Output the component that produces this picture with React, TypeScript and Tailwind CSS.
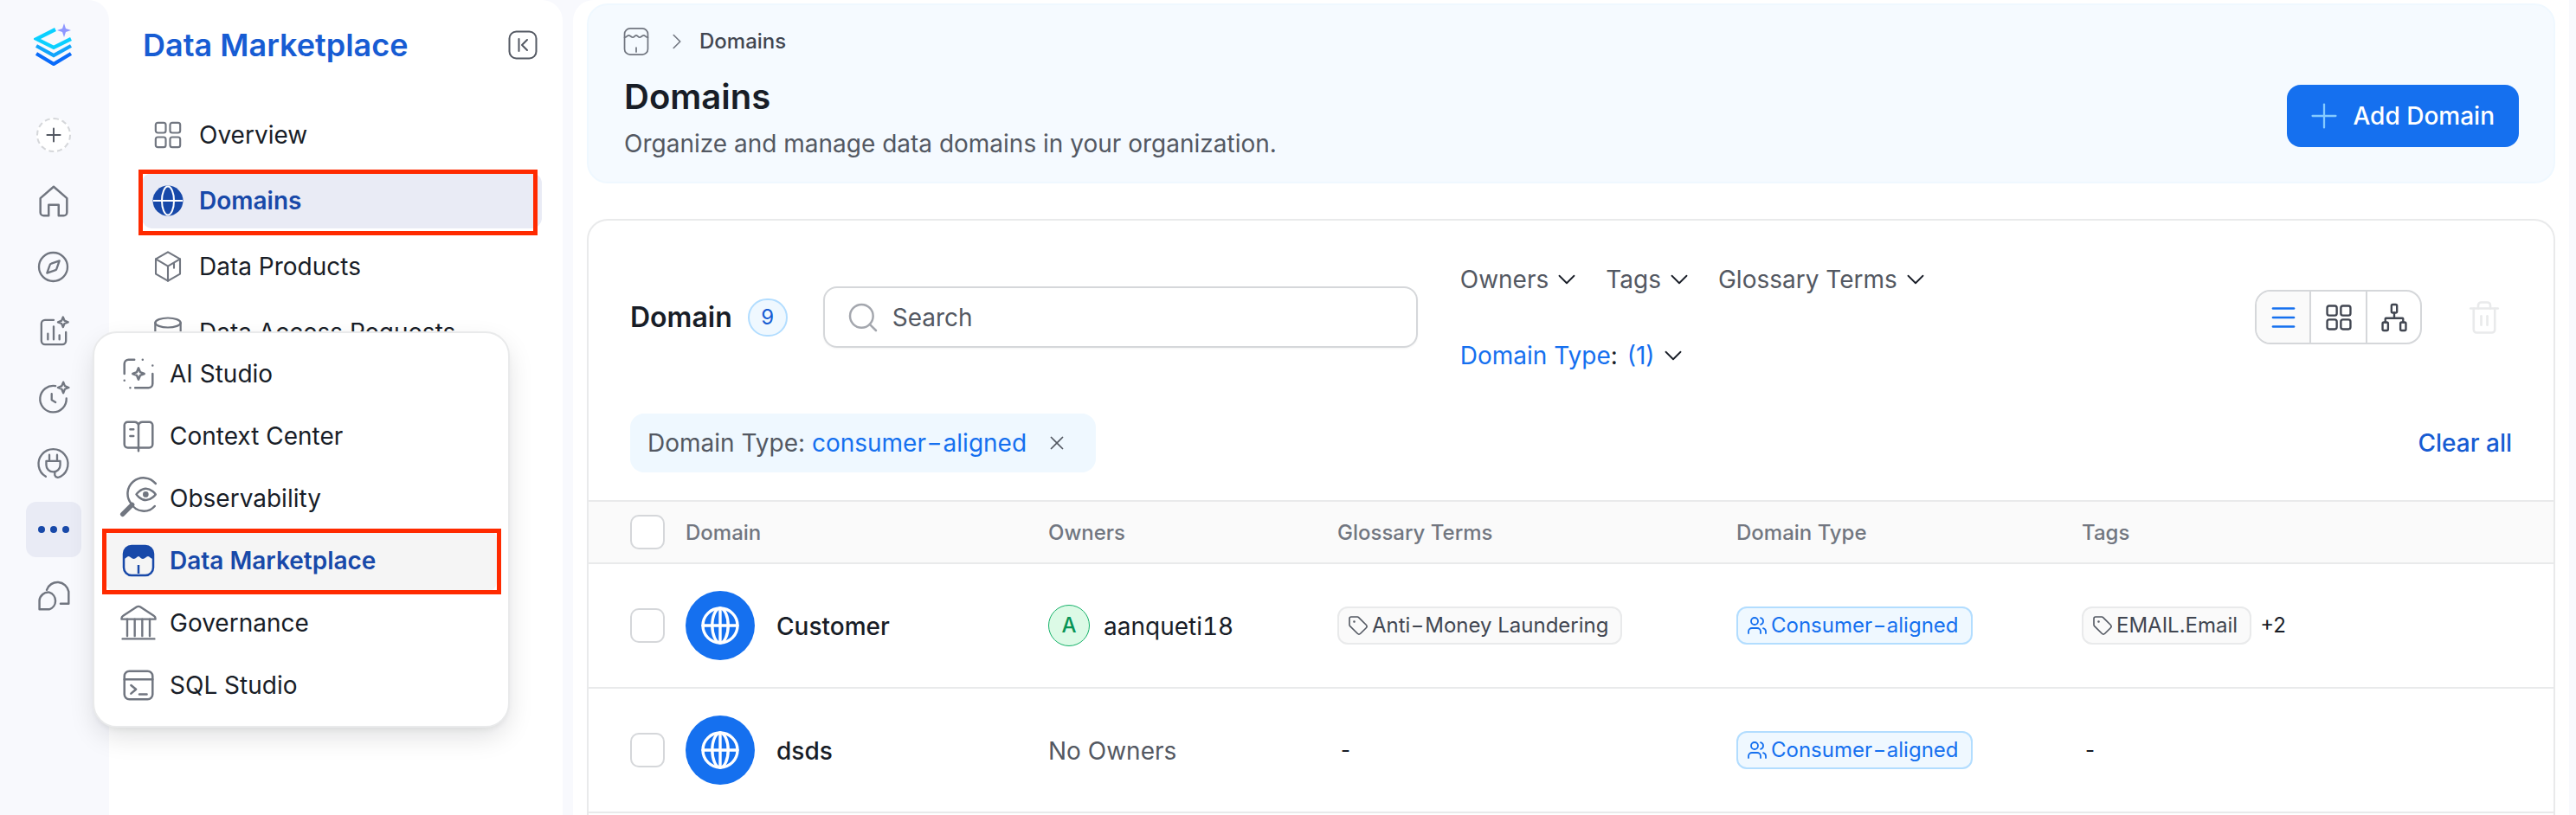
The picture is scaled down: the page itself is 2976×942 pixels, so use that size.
import { ChevronDown, ChevronRight, Menu, Plus, Search, Tag, Trash2, Users, X } from 'lucide-react'
import type { ReactNode } from 'react'

function Ic({ size = 32, width = 1.3, className = '', children }: { size?: number; width?: number; className?: string; children: ReactNode }) {
  return (
    <svg width={size} height={size} viewBox="0 0 24 24" fill="none" stroke="currentColor" strokeWidth={width} strokeLinecap="round" strokeLinejoin="round" className={className}>
      {children}
    </svg>
  )
}

const sparkle = 'M18.5 1.5l1 2.5 2.5 1-2.5 1-1 2.5-1-2.5-2.5-1 2.5-1z'

function Logo() {
  return (
    <svg width="46" height="52" viewBox="0 0 46 52" fill="none" strokeWidth="4.2">
      <path d="M25 10 3 21l20 10 20-10" stroke="#0bd0ff" />
      <path d="M3 29l20 11 20-11" stroke="#12a5fb" />
      <path d="M3 38l20 12 20-12" stroke="#0a6bfa" />
      <path d="M35 3l2 6 6 2-6 2-2 6-2-6-6-2 6-2z" fill="#7c86ff" opacity="0.85" />
    </svg>
  )
}

// the wide hyphen of the product's Inter build
const Hy = () => <span className="mx-[0.12em] inline-block scale-x-[1.4]">-</span>

const HomeIc = () => <Ic size={46}><path d="M4 10.500 12 3.500l8 7V19a2 2 0 0 1-2 2h-3v-6.500H9V21H6a2 2 0 0 1-2-2z" /></Ic>
const CompassIc = () => <Ic size={43}><circle cx="12" cy="12" r="9.200" /><path d="M16 8l-1.800 5.200a1.500 1.500 0 0 1-1 1L8 16l1.800-5.200a1.500 1.500 0 0 1 1-1z" /></Ic>
const ChartIc = () => <Ic size={40} width={1.400}><path d="M12 3.500H6a2.500 2.500 0 0 0-2.500 2.500v12A2.500 2.500 0 0 0 6 20.500h12a2.500 2.500 0 0 0 2.500-2.500v-6" /><path d="M8 17v-4M12 17V8M16 17v-3" /><path d={sparkle} /></Ic>
const ClockIc = () => <Ic size={43}><path d="M13.500 4A8.500 8.500 0 1 0 20.500 12" /><path d="M11 9v4l2.500 1.500" /><path d={sparkle} /></Ic>
const PlugIc = () => <Ic size={43}><path d="M7.200 20a9.500 9.500 0 1 1 9.600 0c-1.600 1-3.300.6-3.800-1v-2" /><path d="M9.500 6v4M14.500 6v4M7.500 10h9v2.500a4.500 4.500 0 0 1-9 0z" /></Ic>
const ChatIc = () => <Ic size={45} className="-mt-[3px]"><path d="M8 9.500a7 7 0 0 1 13.500 1V18h-5" /><path d="M9.500 11a5.500 5.500 0 0 1 0 10.500H3.500V16a5.500 5.500 0 0 1 6-5z" /></Ic>
const GridIc = ({ size = 40, width = 1.300 }: { size?: number; width?: number }) => <Ic size={size} width={width}><rect x="3.500" y="3.500" width="7" height="7" rx="1.500" /><rect x="13.500" y="3.500" width="7" height="7" rx="1.500" /><rect x="3.500" y="13.500" width="7" height="7" rx="1.500" /><rect x="13.500" y="13.500" width="7" height="7" rx="1.500" /></Ic>
const CubeIc = () => <Ic size={42} width={1.200}><path d="M12 2.500l8 4.600v9.800l-8 4.600-8-4.600V7.100z" /><path d="M4 7.100l8 4.700 8-4.700M12 11.800v9.700M16 9.500V13" /></Ic>
const DbIc = () => <Ic size={44} width={1.200}><ellipse cx="12" cy="6" rx="8" ry="3" /><path d="M4 6v12c0 1.700 3.600 3 8 3s8-1.300 8-3V6" /></Ic>
const GlobeFilled = () => (
  <svg width="36" height="36" viewBox="0 0 36 36" fill="none" stroke="#fff" strokeWidth="2">
    <circle cx="18" cy="18" r="17.500" fill="#1849a9" stroke="none" />
    <ellipse cx="18" cy="18" rx="7" ry="16.500" />
    <path d="M1 18h34" />
  </svg>
)
const GlobeLine = () => <Ic size={48} width={1.700}><circle cx="12" cy="12" r="10" /><ellipse cx="12" cy="12" rx="4.600" ry="10" /><path d="M2 12h20M12 2v20" /></Ic>
const CollapseIc = () => (
  <svg width="34" height="34" viewBox="0 0 34 34" fill="none" stroke="#535862" strokeWidth="2" strokeLinecap="round" strokeLinejoin="round">
    <rect x="1.500" y="1.500" width="31" height="31" rx="8" />
    <path d="M12.500 10v14M22 11l-6 6 6 6" />
  </svg>
)
const StudioIc = () => <Ic size={46}><path d="M9.500 3.500H6A2.500 2.500 0 0 0 3.500 6v6M20.500 12v6a2.500 2.500 0 0 1-2.500 2.500H10M14.500 3.500h.01M20.500 7h.01M7 20.500h.01M3.500 16h.01" /><path d="M12 8.500l1 2.500 2.500 1-2.500 1-1 2.500-1-2.500-2.500-1 2.500-1z" /></Ic>
const BookIc = () => <Ic size={46}><path d="M12 5.500a2.500 2.500 0 0 0-2.500-2H5.500a2 2 0 0 0-2 2V17a2 2 0 0 0 2 2H12h6.500a2 2 0 0 0 2-2V5.500a2 2 0 0 0-2-2h-4a2.500 2.500 0 0 0-2.500 2V21" /><path d="M7 8h2M7 12h2" /></Ic>
const EyeSearchIc = () => <Ic size={50} width={1.200}><path d="M21.500 3.800A8 8 0 0 0 8 15a8 8 0 0 0 13 1.300" /><path d="M8.500 15.500 3.200 20.800" strokeWidth="2.600" /><path d="M10.800 9.800s2.200-3.200 5.300-3.200 5.400 3.200 5.400 3.200-2.300 3.200-5.400 3.200-5.300-3.200-5.300-3.200z" /><circle cx="16" cy="9.800" r="1" fill="currentColor" /></Ic>
const StoreFilled = () => (
  <svg width="38" height="38" viewBox="0 0 38 38" fill="none">
    <rect x="2" y="2" width="34" height="34" rx="9" stroke="#1849a9" strokeWidth="2.500" />
    <path d="M2 11a9 9 0 0 1 9-9h16a9 9 0 0 1 9 9v6c-3 0-4-3-6-3s-3.500 3-6 3-3.500-3-5-3-3 3-5.500 3-4-3-6-3-3 3-5.500 3z" fill="#1849a9" />
    <path d="M19 24v10" stroke="#1849a9" strokeWidth="2.500" />
  </svg>
)
const StoreLine = () => <Ic size={38} width={1.100} className="-ml-[5px] text-[#717680]"><rect x="3.500" y="2.500" width="17" height="19" rx="4" /><path d="M3.500 9c1.500 0 2-1.500 3-1.500S8.500 9 9.500 9s1.700-1.500 2.500-1.500S13.500 9 14.500 9s2-1.500 3-1.500S19 9 20.500 9M12 16.500v3" /></Ic>
const BankIc = () => <Ic size={52} width={1.100}><path d="M3 9.500c0-.6.3-1 .8-1.300L11 3.500a1.800 1.800 0 0 1 2 0l7.200 4.700c.5.300.8.700.8 1.300v.5H3z" /><path d="M6 10v9M10 10v9M14 10v9M18 10v9M3.500 20.500h17" /></Ic>
const SqlIc = () => <Ic size={46}><rect x="3.500" y="3.500" width="17" height="17" rx="3" /><path d="M3.500 8.500h17M7.500 12l3 2.500-3 2.500M12.500 17.500h4.500" /></Ic>
const TreeIc = () => <Ic size={38} width={1.500}><rect x="10" y="2.500" width="4" height="6" rx="1" /><rect x="3.500" y="15.500" width="4" height="6" rx="1" /><rect x="16.500" y="15.500" width="4" height="6" rx="1" /><path d="M12 8.500v4M5.500 15.500V13a.5.5 0 0 1 .5-.5h12a.5.5 0 0 1 .5.500v2.500" /></Ic>

const railItems = [
  { key: 'add', icon: <div className="flex size-[40px] items-center justify-center rounded-full border-2 border-dashed border-[#d5d7da] bg-white text-[#535862]"><Plus size={26} strokeWidth={1.800} /></div> },
  { key: 'home', icon: <HomeIc /> },
  { key: 'compass', icon: <CompassIc /> },
  { key: 'chart', icon: <ChartIc /> },
  { key: 'clock', icon: <ClockIc /> },
  { key: 'plug', icon: <PlugIc /> },
  { key: 'more', icon: <div className="flex size-full items-center justify-center gap-[6px] rounded-[12px] bg-[#e9ebf5]"><span className="size-[8px] rounded-full bg-[#1849a9]" /><span className="size-[8px] rounded-full bg-[#1849a9]" /><span className="size-[8px] rounded-full bg-[#1849a9]" /></div> },
  { key: 'chat', icon: <ChatIc /> },
]

const popItems = [
  { label: 'AI Studio', icon: <StudioIc /> },
  { label: 'Context Center', icon: <BookIc /> },
  { label: 'Observability', icon: <EyeSearchIc /> },
  { label: 'Data Marketplace', icon: <StoreFilled />, active: true },
  { label: 'Governance', icon: <BankIc /> },
  { label: 'SQL Studio', icon: <SqlIc /> },
]

function Checkbox() {
  return <div className="size-[40px] shrink-0 rounded-[10px] border-2 border-[#d5d7da] bg-white" />
}

function FilterBtn({ label }: { label: string }) {
  return (
    <button className="flex items-center gap-[4px] text-[28px] leading-[36px] text-[#535862]">
      {label}
      <ChevronDown size={34} strokeWidth={1.300} className="text-[#181d27]" />
    </button>
  )
}

function Row({ name, owner, glossary, tag }: { name: string; owner?: string; glossary?: ReactNode; tag?: string }) {
  return (
    <div className="flex h-[144px] items-center border-b-2 border-[#e9eaeb] pl-[48px]">
      <Checkbox />
      <div className="ml-[24px] flex w-[419px] items-center gap-[25px]">
        <div className="flex size-[80px] items-center justify-center rounded-full bg-[#1570ef] text-white"><GlobeLine /></div>
        <span className="pt-[2px] text-[28px] font-medium leading-[36px] text-[#181d27]">{name}</span>
      </div>
      <div className="flex w-[334px] items-center gap-[16px]">
        {owner ? (
          <>
            <div className="flex size-[48px] items-center justify-center rounded-full border border-[#17b26a] bg-[#dcfae6] text-[24px] font-medium text-[#079455]">A</div>
            <span className="pt-[2px] text-[28px] leading-[36px] text-[#181d27] tabular-nums">{owner}</span>
          </>
        ) : (
          <span className="pt-[2px] text-[28px] leading-[36px] text-[#535862]">No Owners</span>
        )}
      </div>
      <div className="w-[461px]">
        {glossary ? (
          <span className="inline-flex h-[44px] items-center gap-[4px] rounded-[12px] border-2 border-[#e9eaeb] bg-[#fafafa] pl-[10px] pr-[14px] text-[24px] text-[#414651]">
            <Tag size={24} strokeWidth={1.600} className="text-[#535862]" />
            <span>{glossary}</span>
          </span>
        ) : (
          <span className="pl-[4px] text-[24px] text-[#181d27]">-</span>
        )}
      </div>
      <div className="w-[399px]">
        <span className="inline-flex h-[44px] items-center gap-[4px] rounded-[12px] border-2 border-[#b2ddff] bg-[#eff8ff] pl-[10px] pr-[14px] text-[24px] text-[#1570ef]">
          <Users size={24} strokeWidth={1.800} />
          <span>Consumer<Hy />aligned</span>
        </span>
      </div>
      <div className="flex items-center gap-[10px]">
        {tag ? (
          <>
            <span className="inline-flex h-[44px] items-center gap-[4px] rounded-[12px] border-2 border-[#e9eaeb] bg-[#fafafa] pl-[10px] pr-[14px] text-[24px] text-[#414651]">
              <Tag size={24} strokeWidth={1.600} className="text-[#535862]" />
              {tag}
            </span>
            <span className="text-[24px] text-[#181d27]">+2</span>
          </>
        ) : (
          <span className="pl-[4px] text-[24px] text-[#181d27]">-</span>
        )}
      </div>
    </div>
  )
}

function App() {
  return (
    <div className="relative flex h-[942px] w-[2976px] overflow-hidden bg-[#f8f9fd] [font-family:Inter,sans-serif]">
      {/* icon rail */}
      <div className="w-[126px] shrink-0 bg-white">
        <div className="flex h-full flex-col items-center rounded-tr-[24px] bg-[#f8f9fd] pr-[3px] pt-[24px]">
          <div className="mb-[48px] flex h-[52px] items-center justify-center"><Logo /></div>
          <div className="flex flex-col gap-[12px] text-[#717680]">
            {railItems.map((item) => (
              <div key={item.key} className="flex h-[64px] w-[64px] items-center justify-center">{item.icon}</div>
            ))}
          </div>
        </div>
      </div>

      {/* section nav */}
      <div className="w-[524px] shrink-0 rounded-tr-[24px] bg-white pl-[38px]">
        <div className="flex h-[104px] w-[457px] items-center justify-between pl-[1px]">
          <h1 className="text-[36px] font-semibold leading-[44px] text-[#175cd3]">Data Marketplace</h1>
          <CollapseIc />
        </div>
        <nav className="mt-[20px] flex w-[462px] flex-col gap-[12px] text-[28px]">
          <a className="flex h-[64px] items-center rounded-[12px] text-[#181d27]"><span className="mr-[6px] flex w-[60px] justify-center text-[#717680]"><GridIc /></span>Overview</a>
          <a className="relative flex h-[64px] items-center rounded-[12px] bg-[#e9ebf5] font-semibold text-[#1849a9]">
            <span className="mr-[6px] flex w-[60px] justify-center"><GlobeFilled /></span>Domains
            <span className="absolute left-[-4px] top-[-4px] h-[76px] w-[461px] border-[5px] border-[#ff2a00]" />
          </a>
          <a className="flex h-[64px] items-center rounded-[12px] text-[#181d27]"><span className="mr-[6px] flex w-[60px] justify-center text-[#717680]"><CubeIc /></span>Data Products</a>
          <a className="flex h-[64px] items-center rounded-[12px] text-[#181d27]"><span className="mr-[6px] flex w-[60px] justify-center text-[#717680]"><DbIc /></span>Data Access Requests</a>
        </nav>
      </div>

      {/* menu from the rail */}
      <div className="absolute left-[107px] top-[383px] w-[482px] rounded-[28px] border-2 border-[#e9eaeb] bg-white py-[11px] pl-[13px] pr-[13px] shadow-[0_12px_32px_-4px_rgba(10,13,18,0.14),0_4px_6px_-2px_rgba(10,13,18,0.06)]">
        {popItems.map((item) => (
          <div key={item.label} className={`relative flex h-[72px] items-center rounded-[12px] text-[28px] ${item.active ? 'bg-[#f5f5f5] font-semibold text-[#1849a9]' : 'text-[#181d27]'}`}>
            <span className="flex w-[74px] justify-center pl-[2px] text-[#717680]">{item.icon}</span>
            {item.label}
            {item.active && <span className="absolute left-[-4px] top-[-1px] h-[76px] w-[461px] border-[5px] border-[#ff2a00]" />}
          </div>
        ))}
      </div>

      <div className="w-[12px] shrink-0" />

      {/* main column */}
      <div className="flex w-[2306px] shrink-0 flex-col rounded-tl-[24px] bg-white pl-[16px] pr-[16px] pt-[4px]">
        <div className="flex justify-between rounded-[24px] border-2 border-[#eff8ff] bg-[#f5faff] pb-[26px] pl-[41px] pr-[40px] pt-[28px]">
          <div>
            <div className="flex h-[28px] items-center text-[24px] font-medium text-[#414651]">
              <StoreLine />
              <ChevronRight size={30} strokeWidth={1.300} className="ml-[13px] text-[#717680]" />
              <span className="ml-[11px]">Domains</span>
            </div>
            <h2 className="mt-[26px] text-[40px] font-semibold leading-[48px] text-[#181d27]">Domains</h2>
            <p className="mt-[12px] text-[28px] leading-[36px] text-[#535862]">Organize and manage data domains in your organization.</p>
          </div>
          <div className="pt-[64px]">
            <button className="flex h-[72px] items-center gap-[10px] rounded-[16px] bg-[#1570ef] pl-[20px] pr-[28px] text-[28px] font-medium text-white">
              <Plus size={46} strokeWidth={1.200} className="text-[#84caff]" />
              Add Domain
            </button>
          </div>
        </div>

        <div className="mt-[41px] flex-1 rounded-t-[24px] border-x-2 border-t-2 border-[#e9eaeb]">
          <div className="flex h-[223px] items-center pl-[48px]">
            <span className="text-[32px] font-semibold leading-[40px] text-[#181d27]">Domain</span>
            <span className="ml-[18px] flex h-[44px] w-[46px] items-center justify-center rounded-full border-2 border-[#b2ddff] bg-[#eff8ff] text-[24px] text-[#175cd3]">9</span>
            <div className="ml-[41px] flex h-[71px] w-[687px] items-center gap-[14px] rounded-[16px] border-2 border-[#d5d7da] pl-[24px] shadow-[0_1px_2px_rgba(10,13,18,0.05)]">
              <Search size={40} strokeWidth={1.500} className="text-[#a4a7ae]" />
              <span className="text-[28px] text-[#535862]">Search</span>
            </div>
            <div className="ml-[49px] flex w-[560px] flex-wrap gap-x-[28px] gap-y-[52px]">
              <FilterBtn label="Owners" />
              <FilterBtn label="Tags" />
              <FilterBtn label="Glossary Terms" />
              <button className="flex items-center gap-[4px] text-[28px] leading-[36px] text-[#1570ef]">
                <span>Domain Type<span className="text-[#181d27]">:</span><span className="ml-[3px]"> (1)</span></span>
                <ChevronDown size={34} strokeWidth={1.300} className="text-[#181d27]" />
              </button>
            </div>
            <div className="ml-auto flex h-[63px] overflow-hidden rounded-[18px] border-2 border-[#d5d7da] text-[#414651]">
              <div className="flex w-[61px] items-center justify-center bg-[#fafafa] text-[#1570ef]"><Menu size={36} strokeWidth={1.800} /></div>
              <div className="flex w-[65px] items-center justify-center border-l-2 border-[#d5d7da]"><GridIc size={38} width={1.500} /></div>
              <div className="flex w-[63px] items-center justify-center border-l-2 border-[#d5d7da]"><TreeIc /></div>
            </div>
            <Trash2 size={42} strokeWidth={1.500} className="ml-[51px] mr-[59px] text-[#e9eaeb]" />
          </div>

          <div className="flex h-[68px] items-center justify-between pl-[48px] pr-[48px]">
            <div className="flex h-[68px] items-center rounded-[16px] bg-[#eff8ff] pl-[20px] pr-[32px] text-[28px] text-[#535862]">
              <span>Domain Type: <span className="text-[#1570ef]">consumer<Hy />aligned</span></span>
              <X size={26} strokeWidth={1.600} className="ml-[22px] text-[#535862]" />
            </div>
            <span className="text-[28px] font-medium text-[#175cd3]">Clear all</span>
          </div>

          <div className="mt-[32px] flex h-[74px] items-center border-y-2 border-[#e9eaeb] bg-[#fafafa] pl-[48px] text-[24px] font-medium text-[#717680]">
            <Checkbox />
            <span className="ml-[24px] w-[419px] pt-[2px]">Domain</span>
            <span className="w-[334px] pt-[2px]">Owners</span>
            <span className="w-[461px] pt-[2px]">Glossary Terms</span>
            <span className="w-[399px] pt-[2px]">Domain Type</span>
            <span className="pt-[2px]">Tags</span>
          </div>
          <Row name="Customer" owner="aanqueti18" glossary={<>Anti<Hy />Money Laundering</>} tag="EMAIL.Email" />
          <Row name="dsds" />
        </div>
      </div>
    </div>
  )
}

export default App
